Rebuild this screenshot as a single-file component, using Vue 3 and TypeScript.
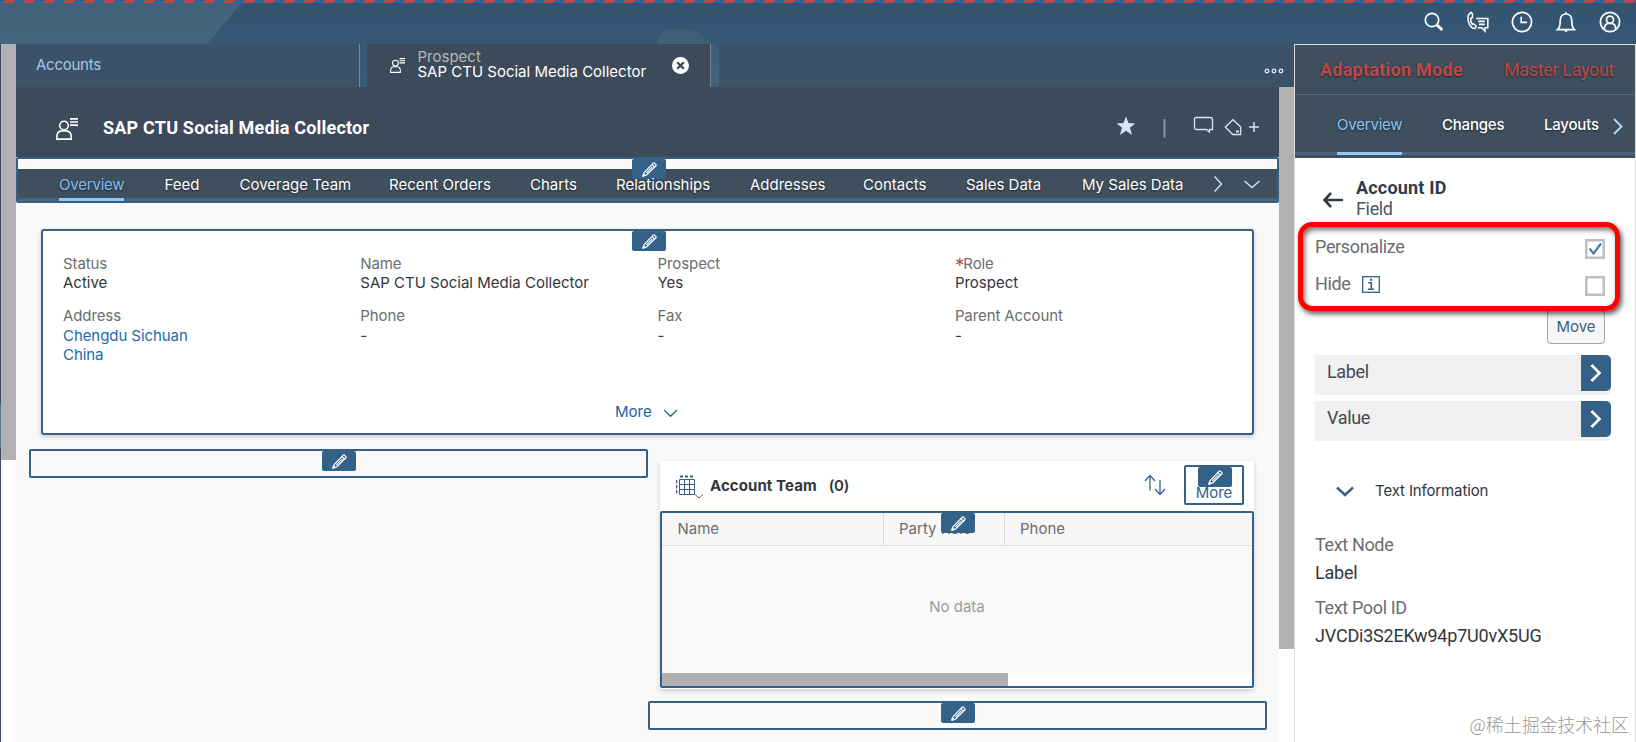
<script setup lang="ts">
import { h, type FunctionalComponent } from 'vue'

interface Field {
  label: string
  lines: string[]
  link?: boolean
  required?: boolean
}

const sections: string[] = [
  'Overview', 'Feed', 'Coverage Team', 'Recent Orders', 'Charts',
  'Relationships', 'Addresses', 'Contacts', 'Sales Data', 'My Sales Data',
]

const fields: Field[] = [
  { label: 'Status', lines: ['Active'] },
  { label: 'Name', lines: ['SAP CTU Social Media Collector'] },
  { label: 'Prospect', lines: ['Yes'] },
  { label: 'Role', lines: ['Prospect'], required: true },
  { label: 'Address', lines: ['Chengdu Sichuan', 'China'], link: true },
  { label: 'Phone', lines: ['-'] },
  { label: 'Fax', lines: ['-'] },
  { label: 'Parent Account', lines: ['-'] },
]

const properties: string[] = ['Label', 'Value']

const details = [
  { name: 'Text Node', value: 'Label' },
  { name: 'Text Pool ID', value: 'JVCDi3S2EKw94p7U0vX5UG' },
]

const svgAttrs = { fill: 'none', stroke: 'currentColor', 'aria-hidden': 'true' }

const PencilIcon: FunctionalComponent = () =>
  h('svg', { ...svgAttrs, width: 15, height: 15, viewBox: '0 0 15 15', 'stroke-width': 1.2, 'stroke-linejoin': 'round' }, [
    h('path', { d: 'M.9 14.1 2.1 10.6 11 1.3Q11.8.5 12.6 1.3L13.7 2.4Q14.500 3.2 13.7 4L4.500 13Z' }),
    h('path', { d: 'M9.900 2.500 12.500 5.100M4.300 10.800 10.300 4.800' }),
    h('path', { d: 'M.9 14.1 1.5 12 3 13.5Z', fill: 'currentColor' }),
  ])

const PersonIcon: FunctionalComponent = () =>
  h('svg', { ...svgAttrs, viewBox: '0 0 22 22', 'stroke-width': 1.6 }, [
    h('circle', { cx: 8, cy: 7.5, r: 4.3 }),
    h('path', { d: 'M.9 21.1V18.5Q.9 13.6 5.3 12.9H10.7Q15.2 13.6 15.2 18.5V21.1Z' }),
    h('path', { d: 'M14 .9H22M14 4H22M14 7.1H22' }),
  ])
</script>

<template>
  <div class="shell">
    <div class="stripe"><div class="stripe-fill"></div></div>
    <header class="topbar">
      <svg class="facets" width="800" height="87" viewBox="0 0 800 87">
        <path d="M0 0H244L207 44H0Z" fill="#5b788a" fill-opacity=".42" />
        <path d="M663 30H694L719 49V87H650V58Z" fill="#5b788a" fill-opacity=".25" />
      </svg>
      <svg class="tool" width="24" height="24" viewBox="0 0 24 24">
        <circle cx="10" cy="10" r="6.7" /><path d="m15 15 5.3 5" stroke-width="3" />
      </svg>
      <svg class="tool" width="24" height="24" viewBox="0 0 24 24">
        <path d="M5.2 2.5 3.5 3.6C.4 6.6 2.4 15.8 7 18.3L9 18.4 10.1 16 7.5 13.8 6.2 14.3C4.9 12.5 4.6 10.2 4.7 8.5L6.4 7.6 6.5 3.9Z" stroke-width="1.5" />
        <path d="M10.2 8.5H21.8V17.8H19V21L15.7 17.8H11.6M12.2 11.4H18.8M13 14.4H18.8" stroke-width="1.6" />
      </svg>
      <svg class="tool" width="24" height="24" viewBox="0 0 24 24">
        <circle cx="12" cy="12" r="9.6" /><path d="M11.2 6.8V12.4H17" stroke-width="1.6" />
      </svg>
      <svg class="tool" width="24" height="24" viewBox="0 0 24 24">
        <path d="M3.5 19.7C6 17 6 15.5 6.3 9.7 6.5 6.4 8.8 4 12 4S17.5 6.4 17.7 9.7C18 15.5 18 17 20.5 19.7Z" />
        <path d="M10.5 3.5 12 1.8 13.5 3.5ZM9.6 20.5H14.4L12 22.3Z" fill="currentColor" stroke="none" />
      </svg>
      <svg class="tool" width="24" height="24" viewBox="0 0 24 24">
        <circle cx="12" cy="12" r="9.6" /><circle cx="12" cy="9.7" r="3.5" />
        <path d="M6.3 19.5C6.4 15.5 8 13.6 10 13.3H14C16 13.6 17.6 15.5 17.7 19.5" />
      </svg>
    </header>

    <div class="body">
      <div class="edge"></div>
      <div class="left-rail"><div class="left-thumb"></div></div>

      <div class="workspace">
        <div class="tabs">
          <div class="tab plain">Accounts</div>
          <div class="tab active">
            <PersonIcon class="tab-icon" />
            <div class="tab-text"><span>Prospect</span><b>SAP CTU Social Media Collector</b></div>
            <svg class="close" width="17" height="17" viewBox="0 0 17 17">
              <circle cx="8.5" cy="8.5" r="8.5" fill="#fff" />
              <path d="m5.2 5.2 6.6 6.6m0-6.6-6.6 6.6" stroke="#33475a" stroke-width="2.200" />
            </svg>
          </div>
          <div class="tab-rest">
            <svg width="20" height="6" viewBox="0 0 20 6">
              <g fill="none" stroke="#d7eaff" stroke-width="1.3"><circle cx="3" cy="3" r="1.8" /><circle cx="10" cy="3" r="1.8" /><circle cx="17" cy="3" r="1.8" /></g>
            </svg>
          </div>
        </div>

        <div class="main">
          <div class="page">
            <div class="title-bar">
              <PersonIcon class="title-icon" />
              <h1>SAP CTU Social Media Collector</h1>
              <svg class="title-tools" width="148" height="24" viewBox="0 0 148 24">
                <path d="m11 2.500 2.500 6.600 6.800.3-5.300 4.300 2 7.300-6-4.200-6.100 4.200 2.100-7.300-5.300-4.300 6.800-.3Z" fill="#cfe6fc" />
                <path d="M49.5 5V23.500" stroke="#8795a2" stroke-width="2" />
                <g fill="none" stroke="#cfe6fc" stroke-width="1.3">
                  <path d="M81 3.500H95Q97.500 3.500 97.500 5.500V15.500H94.500V18L91.500 15.500H81Q79.500 15.500 79.500 14V5Q79.500 3.500 81 3.500Z" />
                  <path d="M110.300 13 118 5.700 125.700 13V20.500H117.700Z" />
                  <path d="M121 17.500H124" stroke-width="2" />
                  <path d="M134 13H144M139 8V18" stroke-width="1.500" />
                </g>
              </svg>
            </div>

            <nav class="section-nav">
              <span class="badge"><PencilIcon /></span>
              <div class="nav-bar">
                <a v-for="(s, i) in sections" :key="s" :class="{ current: i === 0 }"><span>{{ s }}</span></a>
                <svg class="nav-arrows" width="50" height="20" viewBox="0 0 50 20">
                  <path d="m2.500 1.500 7 7.500-7 7.500M32.500 6l7.500 6.500L47.500 6" fill="none" stroke="#cfe6fc" stroke-width="1.4" />
                </svg>
              </div>
            </nav>

            <section class="card">
              <span class="badge"><PencilIcon /></span>
              <div class="fields">
                <div v-for="f in fields" :key="f.label" class="field">
                  <div class="field-label"><i v-if="f.required">*</i>{{ f.label }}</div>
                  <div v-for="l in f.lines" :key="l" class="field-value" :class="{ link: f.link }">{{ l }}</div>
                </div>
              </div>
              <div class="more">
                More
                <svg width="15" height="9" viewBox="0 0 15 9"><path d="m1 1 6.500 6.300L14 1" fill="none" stroke="currentColor" stroke-width="1.2" /></svg>
              </div>
            </section>

            <div class="columns">
              <div class="drop-zone"><span class="badge"><PencilIcon /></span></div>
              <div class="right-column">
                <section class="team">
                  <div class="team-head">
                    <svg class="grid-icon" width="28" height="24" viewBox="0 0 28 24" fill="none" stroke="#346187">
                      <path d="M3.500 4.500H18.500V19.500H3.500ZM3.500 9.500H18.500M3.500 14.500H18.500M8.500 4.500V19.500M13.500 4.500V19.500" />
                      <path d="M4 1.500H18" stroke-width="2" stroke-dasharray="3 2" />
                      <path d="M.7 5V19" stroke="#604f80" stroke-width="1.300" stroke-dasharray="3.500 1.500" />
                      <path d="m19 19.500 4 3.500 4-3.500" />
                    </svg>
                    <h2>Account Team</h2><h2 class="count">(0)</h2>
                    <svg class="sort" width="22" height="22" viewBox="0 0 22 22">
                      <path d="M6 16.500V1.500M1 7l5-5.500L11 7M16 6V20.500M11 15l5 5.500 5-5.500" fill="none" stroke="#2f6595" stroke-width="1.300" />
                    </svg>
                    <div class="more-box"><span class="badge"><PencilIcon /></span><span>More</span></div>
                  </div>
                  <div class="table">
                    <span class="badge"><PencilIcon /></span>
                    <div class="table-head"><span>Name</span><span>Party Role</span><span>Phone</span></div>
                    <div class="empty">No data</div>
                    <div class="scroll-track"><div class="scroll-thumb"></div></div>
                  </div>
                </section>
                <div class="drop-zone"><span class="badge"><PencilIcon /></span></div>
              </div>
            </div>
          </div>
          <div class="rail"><div class="rail-thumb"></div></div>
        </div>
      </div>

      <aside class="panel">
        <div class="panel-mode"><b>Adaptation Mode</b><span>Master Layout</span></div>
        <div class="panel-tabs">
          <a class="current">Overview</a><a>Changes</a><a>Layouts</a>
          <svg width="10" height="17" viewBox="0 0 10 17"><path d="m1 1 7.500 7.500L1 16" fill="none" stroke="#b4d8f8" stroke-width="1.900" /></svg>
        </div>

        <div class="panel-title">
          <svg width="20" height="16" viewBox="0 0 20 16"><path d="M8 1 1.500 8 8 15M1.500 8H20" fill="none" stroke="#2f3c48" stroke-width="2.600" /></svg>
          <div><b>Account ID</b><span>Field</span></div>
        </div>

        <div class="highlight">
          <label><span>Personalize</span>
            <svg class="check" width="20" height="20" viewBox="0 0 20 20"><rect x="1.250" y="1.250" width="17.500" height="17.500" fill="#fff" stroke="#bfbfbf" stroke-width="2.500" /><path d="m4.500 9.500 4 5 7.500-10" fill="none" stroke="#427cac" stroke-width="2.100" /></svg>
          </label>
          <label><span>Hide</span>
            <svg class="info" width="18" height="17" viewBox="0 0 18 17" fill="none" stroke="#346187">
              <rect x=".7" y=".7" width="16.600" height="15.600" stroke-width="1.300" />
              <path d="M6.300 6.700H9.300V13M6 13.200H12" stroke-width="1.600" /><path d="M8 3.800H10.300" stroke-width="2" />
            </svg>
            <svg class="check" width="20" height="20" viewBox="0 0 20 20"><rect x="1.250" y="1.250" width="17.500" height="17.500" fill="#fff" stroke="#bfbfbf" stroke-width="2.500" /></svg>
          </label>
        </div>

        <button class="move">Move</button>

        <div class="props">
          <div v-for="p in properties" :key="p" class="prop">
            <span>{{ p }}</span>
            <i><svg width="12" height="18" viewBox="0 0 12 18"><path d="m1.500 1 8 8-8 8" fill="none" stroke="#fff" stroke-width="2.600" /></svg></i>
          </div>
        </div>

        <div class="text-info">
          <svg width="18" height="11" viewBox="0 0 18 11"><path d="m1 1.500 8 7.500 8-7.500" fill="none" stroke="#346187" stroke-width="2.400" /></svg>
          Text Information
        </div>

        <dl>
          <template v-for="d in details" :key="d.name"><dt>{{ d.name }}</dt><dd>{{ d.value }}</dd></template>
        </dl>
        <div class="watermark">@稀土掘金技术社区</div>
      </aside>
    </div>
  </div>
</template>

<style>
html, body { margin: 0; overflow: hidden; }
</style>

<style scoped>
.shell, .shell * { box-sizing: border-box; }
.shell {
  position: relative;
  width: 1636px;
  height: 742px;
  overflow: hidden;
  display: flex;
  flex-direction: column;
  background: linear-gradient(#33546f 0, #38597a 44px, #3c5d7b 90px);
  background: linear-gradient(#33546f 0, #375875 44px, #3b5c79 90px);
  font: 15px/20px Inter, "Liberation Sans", sans-serif;
  color: #32363a;
}
h1, h2, dl, dd { margin: 0; }
svg { flex: none; display: block; }

.stripe { height: 3px; overflow: hidden; background: #2b669a; }
.stripe-fill {
  width: 1660px;
  height: 3px;
  margin-left: -16px;
  transform: skewX(-27deg);
  background: repeating-linear-gradient(90deg, #c14646 0 10px, #2b669a 10px 20px);
}
.topbar {
  height: 41px;
  display: flex;
  justify-content: flex-end;
  align-items: center;
  gap: 20px;
  padding: 0 14px 3px 0;
}
.facets { position: absolute; left: 0; top: 0; clip-path: inset(3px 0 0 0); }
.tool { fill: none; stroke: currentColor; stroke-width: 1.7; color: #fff; }

.body { position: relative; flex: 1; display: flex; }
.edge { width: 1px; background: linear-gradient(#3c4a60 0 360px, #5d7590 360px 404px, #3c4a60 404px); }
.left-rail { width: 15px; background: #fff; }
.left-thumb { height: 416px; background: #b1b1b1; }
.workspace { width: 1278px; display: flex; flex-direction: column; }

.tabs { height: 43px; display: flex; }
.tab { display: flex; align-items: center; }
.tab.plain {
  width: 344px;
  margin-right: 7px;
  padding: 0 0 2px 20px;
  background: #3c5269;
  border-right: 1px solid #728699;
  color: #a4c6e6;
  letter-spacing: -.25px;
}
.tab.active { width: 344px; padding-left: 23px; background: #3c4a5a; border-right: 1px solid #768490; color: #fff; }
.tab-icon { width: 15px; height: 15px; margin-top: -1px; }
.tab-text { width: 253px; margin: -3px 0 0 12.500px; line-height: 15px; display: flex; flex-direction: column; }
.tab-text span { color: #b5b6b7; }
.tab-text b { font-weight: 400; }
.close { margin: -1px 0 0 1px; }
.tab-rest { flex: 1; margin-left: 8px; padding: 24px 10px 0 0; display: flex; justify-content: flex-end; background: #3c5269; }

.main { flex: 1; display: flex; }
.page { width: 1263px; background: #f9f9f9; }
.rail { width: 15px; background: #fff; }
.rail-thumb { height: 562px; background: #b1b1b1; }

.title-bar { height: 70px; display: flex; align-items: center; padding: 11px 16px 0 40px; background: #3c4a5a; color: #fff; }
.title-icon { width: 22px; height: 22px; margin-top: 3px; }
h1 { margin-left: 25px; font: 700 18px/24px Roboto, sans-serif; letter-spacing: .2px; }
.title-tools { margin-left: auto; margin-top: -3px; }

.badge {
  position: absolute;
  left: 50%;
  top: 0;
  width: 34px;
  height: 20px;
  margin-left: -17px;
  display: flex;
  align-items: center;
  justify-content: center;
  background: #346187;
  border-radius: 2px;
  color: #fff;
}
.section-nav { position: relative; height: 46px; padding-top: 10px; border: 2px solid #346187; border-radius: 2px; background: #fafafa; }
.section-nav .badge { left: 631px; }
.nav-bar {
  height: 32px;
  display: grid;
  grid-template-columns: 105.500px 75px 149.500px 141px 86px 134px 113px 103px 116px 130px 50px;
  padding-left: 41px;
  background: #3f4f5e;
  border-bottom: 3px solid #4a637b;
  color: #fff;
  text-shadow: 0 1px 2px rgba(0, 0, 0, .55);
}
.nav-bar a { height: 32px; line-height: 32px; }
.nav-bar span { position: relative; }
.nav-bar .current span { display: inline-block; height: 32px; border-bottom: 3px solid #91c8f6; color: #7fbdf1; letter-spacing: -.2px; }
.nav-arrows { margin: 6px 0 0; }

.card {
  position: relative;
  width: 1213px;
  height: 206px;
  margin: 26px 0 0 25px;
  padding: 23px 0 0 20px;
  background: #fff;
  border: 2px solid #346187;
  border-radius: 3px;
  box-shadow: 0 2px 5px rgba(0, 0, 0, .2);
}
.card .badge { left: 606px; }
.fields { height: 148px; display: grid; grid-template: 52px 96px / repeat(4, 297.3px); }
.field-label { height: 19px; color: #6a6d70; letter-spacing: -.1px; }
.field-label i { color: #c14646; font-style: normal; font-size: 19px; line-height: 10px; vertical-align: -3px; margin-right: -1px; }
.field-value { line-height: 19px; color: #32363a; }
.field:nth-child(n + 5) .field-label { height: 20px; }
.link { color: #1a6bab; line-height: 19px; letter-spacing: -.07px; }
.more { display: flex; align-items: center; gap: 11px; margin-left: 552px; color: #1763a0; }
.more svg { margin-top: 2px; }

.columns { display: flex; }
.drop-zone { position: relative; width: 619px; height: 29px; border: 2px solid #346187; border-radius: 2px; }
.columns > .drop-zone { margin: 14px 0 0 13px; }
.drop-zone .badge { left: 308px; }
.right-column { margin-top: 26px; }
.team { width: 594px; height: 228px; margin-left: 12px; background: #fff; box-shadow: 0 2px 5px rgba(0, 0, 0, .17); }
.team-head { height: 50px; display: flex; align-items: center; padding: 0 10px 0 16px; color: #32363a; }
.grid-icon { margin-top: 1px; }
h2 { margin-left: 6px; font: 700 15px/20px Inter, sans-serif; letter-spacing: .08px; }
.count { margin-left: 12px; font-weight: 600; letter-spacing: -.2px; }
.sort { margin: -2px 18px 0 auto; }
.more-box {
  position: relative;
  width: 60px;
  height: 40px;
  margin-top: -2px;
  padding-top: 16px;
  border: 2px solid #346187;
  border-radius: 2px;
  text-align: center;
  color: #346187;
}
.more-box .badge { left: 29px; }
.table { position: relative; height: 177px; border: 2px solid #346187; border-radius: 2px; background: #f9f9f9; }
.table .badge { left: 296px; }
.table-head { height: 33px; display: grid; grid-template-columns: 221.500px 121px 1fr; background: #f7f7f7; border-bottom: 1px solid #e0e0e0; color: #6a6d70; }
.table-head span { padding-left: 15.500px; line-height: 32px; border-right: 1px solid #dcdcdc; }
.table-head span:last-child { border: 0; }
.empty { height: 127px; line-height: 121px; text-align: center; color: #999; }
.scroll-track { height: 13px; background: #fff; }
.scroll-thumb { width: 346px; height: 13px; background: #b1b1b1; }
.right-column > .drop-zone { margin-top: 12px; }

.panel {
  position: relative;
  width: 342px;
  background: #fff;
  border: solid #dcdcdc;
  border-width: 1px 1px 0;
  font: 18px/24px Roboto, sans-serif;
  letter-spacing: -.35px;
  color: #32363a;
}
.panel-mode { height: 50px; display: flex; justify-content: space-between; align-items: center; padding: 1px 21px 0 25px; background: #3f4f5e; border-bottom: 1px solid #4f6a84; color: #c14646; text-shadow: 0 1px 2px rgba(0, 0, 0, .5); }
.panel-mode b { letter-spacing: .25px; }
.panel-tabs {
  height: 63px;
  display: grid;
  grid-template-columns: 105px 102px 69px 10px;
  padding: 0 0 3px 42px;
  background: linear-gradient(#3f4f5e 57px, #4a637b 57px 60px, #3f4f5e 60px);
  font: 15px/60px Inter, sans-serif;
  letter-spacing: -.2px;
  color: #fff;
  text-shadow: 0 1px 2px rgba(0, 0, 0, .55);
}
.panel-tabs a { justify-self: start; height: 60px; font-weight: 500; }
.panel-tabs .current { border-bottom: 3px solid #91c8f6; color: #8ac2f2; font-weight: 400; }
.panel-tabs svg { margin-top: 23px; }
.panel-title { display: flex; align-items: center; height: 64px; padding: 16px 0 0 28px; }
.panel-title svg { margin-top: 3px; }
.panel-title div { display: flex; flex-direction: column; margin-left: 13px; line-height: 21px; }
.panel-title b { letter-spacing: .18px; color: #2f3c48; }
.panel-title b + span { color: #4a5561; }

.highlight {
  position: relative;
  z-index: 1;
  width: 322px;
  height: 89px;
  margin-left: 3px;
  padding: 8px 11px 0 12px;
  border: 5px solid #f00;
  border-radius: 14px;
  box-shadow: 2px 3px 5px rgba(0, 0, 0, .65), inset 2px 3px 5px rgba(0, 0, 0, .55);
  color: #6a6d70;
}
.highlight label { display: flex; height: 37px; }
.check { margin: 4px -1px 0 auto; }
.info { margin: 4px 0 0 11px; }
.move {
  display: block;
  width: 58px;
  height: 34px;
  margin: -1px 0 0 252px;
  padding: 0 0 1px;
  background: #f7f7f7;
  border: 1px solid #a6a6a6;
  border-radius: 4px;
  font: 15px/30px Inter, sans-serif;
  color: #346187;
}
.props { margin: 11px 24px 0 20px; display: grid; gap: 6px; }
.prop { height: 40px; display: flex; justify-content: space-between; padding-left: 12px; background: #f1f1f1; border-radius: 0 5px 5px 0; line-height: 34px; color: #3f4a55; }
.prop i { width: 30px; height: 36px; display: flex; align-items: center; justify-content: center; background: #346187; border-radius: 0 5px 5px 0; }
.text-info { height: 20px; margin-top: 40px; padding-left: 41px; display: flex; align-items: center; gap: 21px; font: 15px/20px Inter, sans-serif; letter-spacing: -.13px; }
dl { margin: 32px 0 0 20px; }
dt { height: 27.500px; color: #6a6d70; }
dd { height: 35.500px; letter-spacing: -.2px; }
.watermark {
  position: absolute;
  right: 6px;
  bottom: 5px;
  font: 300 17.900px/26px "Noto Sans CJK SC", sans-serif;
  letter-spacing: 0;
  color: #999;
}
</style>
